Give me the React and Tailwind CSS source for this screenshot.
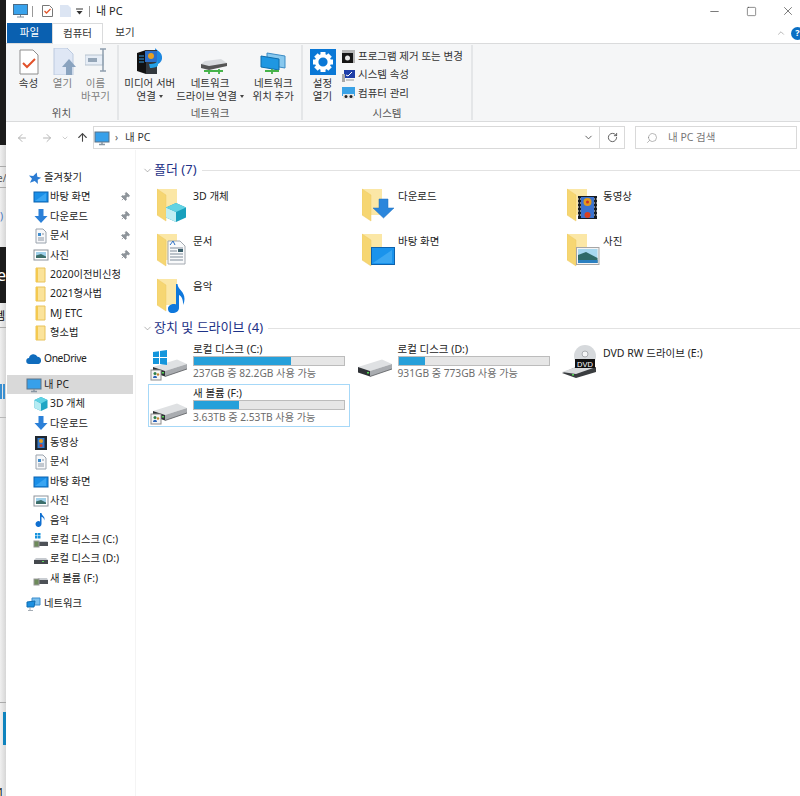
import React from 'react';
import { ArrowLeft, ArrowRight, ArrowUp, ChevronDown, ChevronUp, RotateCw, Search, Pin, Minus, Square, X } from 'lucide-react';

/* small nav pane icons, all 16x16 */
const Mini = ({ type }) => {
  const icons = {
    star: <path d="M9.500 2l1.500 4 4 .3-3 2.600 1 4.100-3.600-2.200L5 13.500l1.200-4.300L2.500 6.500l4.300-.3z" fill="#2b7cd3" transform="rotate(12 8 8)" />,
    desktop: <><rect x="1" y="3" width="14" height="10" fill="#1a8fe8" stroke="#0a62b0" /><path d="M2 12l11-8v8z" fill="#3aa5f2" /></>,
    download: <path d="M5.500 1h5v7h4L8 15 1.500 8h4z" fill="#2b80d8" />,
    doc: <><path d="M3 1h7l3 3v11H3z" fill="#f6f7f9" stroke="#9aa3ad" /><path d="M5 5h3v3H5z" fill="#3f8ccc" /><path d="M5 10h6M5 12h6M9 6h2" stroke="#8b96a3" /></>,
    photo: <><rect x="1" y="3" width="14" height="10" fill="#fff" stroke="#8d949b" /><rect x="3" y="5" width="10" height="6" fill="#9fd0ea" /><path d="M3 11V8.500l5-1.500 5 2.500V11z" fill="#3c6e6a" /></>,
    folder: <><path d="M3 1h9v14H3z" fill="#fbe39a" stroke="#e8c25a" /><path d="M3 1h2v14H3z" fill="#f4c94f" /></>,
    cloud: <path d="M3.500 13a3 3 0 0 1-.5-6 4.500 4.500 0 0 1 8.500-1.200A3.700 3.700 0 0 1 12.500 13z" fill="#0f6cbd" />,
    pc: <><rect x="1" y="2" width="14" height="10" fill="#37a0ea" stroke="#5d7286" /><path d="M5 14.500h6M8 12v2" stroke="#8a97a3" strokeWidth="1.500" /></>,
    cube: <><path d="M8 1l6.500 3v8L8 15l-6.500-3V4z" fill="#1fa5c4" /><path d="M8 7.500V15l-6.500-3V4z" fill="#b6ecf3" /><path d="M8 1l6.500 3L8 7.500 1.500 4z" fill="#5fd2e4" /></>,
    film: <><rect x="2" y="1" width="12" height="14" fill="#20272f" /><rect x="4.500" y="3" width="7" height="10" fill="#3478c8" /><circle cx="8" cy="6" r="2" fill="#e8a020" /><circle cx="8" cy="10.500" r="1.500" fill="#d23a2a" /></>,
    note: <path d="M7 1h1.500c.3 3 4.500 3.500 2.500 7.500.3-2.500-1-3.300-2.500-3.800V12a3 3 0 1 1-1.500-2.600z" fill="#0f6fd0" />,
    driveC: <><path d="M4 10h11v4H4z" fill="#4d5157" /><path d="M5 9h9l1 1H4z" fill="#c9cdd2" /><path d="M2 1h2.500v2.500H2zM5 1h2.500v2.500H5zM2 4h2.500v2.500H2zM5 4h2.500v2.500H5z" fill="#1793dd" /><rect x="1" y="9" width="5" height="6" fill="#6d8a5a" stroke="#999" /></>,
    drive: <><path d="M1 9h14v4H1z" fill="#44484d" /><path d="M3 7h10l2 2H1z" fill="#c6cacf" /><rect x="9" y="10" width="2" height="1" fill="#5fd35f" /></>,
    driveF: <><path d="M4 9h11v4H4z" fill="#4d5157" /><path d="M5 7h9l1 2H4z" fill="#c9cdd2" /><rect x="1" y="8" width="5" height="6" fill="#6d8a5a" stroke="#999" /></>,
    network: <><path d="M6 2h8v7H6z" fill="#7cc0ee" stroke="#3a8ccc" /><path d="M1 6l8-1-1 6H1z" fill="#1b8fe0" stroke="#0f6cb0" /><path d="M4 11v3M2 14.500h5" stroke="#a5adb5" /></>,
  };
  return <svg width="16" height="16" viewBox="0 0 16 16" className="shrink-0">{icons[type]}</svg>;
};

const favorites = [
  ['desktop', '바탕 화면', true],
  ['download', '다운로드', true],
  ['doc', '문서', true],
  ['photo', '사진', true],
  ['folder', '2020이전비신청'],
  ['folder', '2021형사법'],
  ['folder', 'MJ ETC'],
  ['folder', '형소법'],
];

const pcItems = [
  ['cube', '3D 개체'],
  ['download', '다운로드'],
  ['film', '동영상'],
  ['doc', '문서'],
  ['desktop', '바탕 화면'],
  ['photo', '사진'],
  ['note', '음악'],
  ['driveC', '로컬 디스크 (C:)'],
  ['drive', '로컬 디스크 (D:)'],
  ['driveF', '새 볼륨 (F:)'],
];

const NavRoot = ({ icon, label, active, className = '', labelClass = '' }) => (
  <div className={`flex items-center h-[19.4px] gap-[2px] text-[#222] ${active ? 'bg-[#d9d9d9] ml-[1px] mr-[2px] pl-[19px]' : 'pl-[20px]'} ${className}`}>
    <Mini type={icon} />
    <span className={labelClass}>{label}</span>
  </div>
);

const NavChild = ({ icon, label, pinned }) => (
  <div className="flex items-center h-[19.4px] pl-[27px] pr-[4px] gap-[1px] text-[#222]">
    <Mini type={icon} />
    <span className="whitespace-nowrap">{label}</span>
    {pinned && <Pin size={10} className="ml-auto mr-[1px] rotate-45 text-[#8f959b] fill-[#8f959b]" />}
  </div>
);

/* big folder with overlay */
const BigFolder = ({ kind }) => {
  const overlays = {
    cube: <><path d="M19 15l10 4.500v10L19 34l-10-4.500v-10z" fill="#18a0bd" /><path d="M19 24v10l-10-4.500v-10z" fill="#bfeef3" /><path d="M19 15l10 4.500-10 4.500-10-4.500z" fill="#62d3e3" /></>,
    download: <path d="M17 11h9v9h6L21.500 30 11 20h6z" fill="#2b86dc" stroke="#1f6fbe" strokeWidth=".5" />,
    film: <g transform="translate(-1 -4)"><rect x="12" y="12" width="19" height="23" fill="#171c22" /><rect x="15" y="13" width="13" height="21" fill="#3a72cf" /><circle cx="21.500" cy="18" r="4" fill="#e29a1b" /><circle cx="21.500" cy="18" r="1.500" fill="#c9302c" /><circle cx="21.500" cy="31" r="3" fill="#d9401f" /><path d="M12 15h3M12 19h3M12 23h3M12 27h3M12 31h3M28 15h3M28 19h3M28 23h3M28 27h3M28 31h3" stroke="#e8e8e8" strokeDasharray="1 1" /></g>,
    doc: <><path d="M11 8h12l5 5v18H11z" fill="#f9fafb" stroke="#a3a9b0" /><path d="M13 12l3-4 2 4" fill="none" stroke="#2a6fc4" /><path d="M13 15h13M13 18h7M13 21h13M13 24h13M13 27h13" stroke="#7e8b99" /><rect x="21" y="16" width="5" height="3" fill="#3a5f6b" /></>,
    desktop: <><rect x="9.500" y="14.500" width="23" height="17" fill="#1a93ec" stroke="#0d62ad" /><path d="M11 30l19-13v13z" fill="#3ba7f2" /></>,
    photo: <><rect x="9.500" y="14.500" width="22.500" height="17" fill="#f4f4f4" stroke="#a6a6a6" /><rect x="11" y="16" width="19.500" height="14" fill="#a7d8f0" /><path d="M11 30v-8l8-3 11.500 6v5z" fill="#2f6a68" /><path d="M11 30v-3h19.500v3z" fill="#2b7fc0" /></>,
    music: <path d="M19 6h1.500c.5 6 7 7 7 15 0 2-.5 4-1.500 6 .5-5-1.500-9-4-10v13c0 3-3 5-6.500 5S11 33 11 30.500s3-4.500 6-4.500c.8 0 1.500.1 2 .4z" fill="#0f78dc" />,
  };
  return (
    <svg width="36" height="36" viewBox="0 0 36 36" className="shrink-0">
      <path d="M0 1h20v26H6z" fill="#fbe7a6" />
      <path d="M0 1l9 6v26l-9-6z" fill="#f6d672" />
      <path d="M0 1l9 6v26l-9-6z" fill="none" stroke="#eecb66" strokeWidth=".5" />
      {overlays[kind]}
    </svg>
  );
};

const folders = [
  ['cube', '3D 개체'],
  ['download', '다운로드'],
  ['film', '동영상'],
  ['doc', '문서'],
  ['desktop', '바탕 화면'],
  ['photo', '사진'],
  ['music', '음악'],
];

const BigDrive = ({ win, share }) => (
  <svg width="44" height="42" viewBox="0 0 44 42" className="shrink-0">
    <path d="M4 26l24-7.500 10 4.500-22 7z" fill="#dfe1e3" />
    <path d="M4 26l12 4v5.500L4 31.500z" fill="#2f3236" />
    <path d="M16 30l22-7v5l-22 7.500z" fill="#a9acb0" />
    <path d="M16 35.500l22-7.500" stroke="#55585c" strokeWidth=".8" />
    <rect x="13" y="31" width="2" height="1.500" fill="#54d654" />
    {win && <path d="M4 11l6-.8V16H4zM11 10l7-1v7h-7zM4 17h6v6H4zM11 17h7v7l-7-1z" fill="#1496dc" />}
    {share && <><rect x="2" y="29" width="10" height="10" fill="#f5f5f5" stroke="#8c8c8c" /><circle cx="6" cy="32.500" r="1.500" fill="#2e7f4a" /><path d="M4 37c0-3 4-3 4 0z" fill="#2a62b8" /><circle cx="9" cy="33.500" r="1.200" fill="#c7862d" /></>}
  </svg>
);

const DvdDrive = () => (
  <svg width="44" height="42" viewBox="0 0 44 42" className="shrink-0">
    <circle cx="27" cy="15" r="11" fill="#d6d9dc" />
    <circle cx="27" cy="13" r="3" fill="#f4f5f6" stroke="#a9adb1" />
    <path d="M4 32l14-6h20v5L18 37z" fill="#3a3d40" />
    <path d="M4 31l14-5h20L18 33z" fill="#d9dbdd" />
    <rect x="17" y="18" width="20" height="9" fill="#111" />
    <text x="27" y="25.500" textAnchor="middle" fontSize="7.500" fill="#fff" fontFamily="Liberation Sans">DVD</text>
    <rect x="14" y="33" width="2" height="1.500" fill="#54d654" />
  </svg>
);

const drives = [
  { name: '로컬 디스크 (C:)', used: 64.500, info: '237GB 중 82.2GB 사용 가능', win: true, share: true },
  { name: '로컬 디스크 (D:)', used: 17.500, info: '931GB 중 773GB 사용 가능' },
  { name: 'DVD RW 드라이브 (E:)', dvd: true },
  { name: '새 볼륨 (F:)', used: 30.300, info: '3.63TB 중 2.53TB 사용 가능', share: true, selected: true },
];

const SectionHead = ({ title, className = '' }) => (
  <div className={`flex items-center h-[20px] pl-[6px] ${className}`}>
    <ChevronDown size={11} strokeWidth={1.200} className="text-[#777]" />
    <span className="ml-[1px] text-[13px] text-[#1e3287] whitespace-nowrap">{title}</span>
    <div className="flex-1 h-px bg-[#e2e2e2] ml-[5px]" />
  </div>
);

const RibbonBtn = ({ w, label, dim, icon }) => (
  <div className={`flex flex-col items-center ${w}`}>
    <div className="h-[29px] flex items-end justify-center">{icon}</div>
    <div className={`mt-[2px] text-center leading-[12.500px] whitespace-nowrap ${dim ? 'text-[#808080]' : 'text-[#333]'}`}>{label}</div>
  </div>
);

const Caret = () => <span className="inline-block align-middle ml-[3px] border-x-[2.500px] border-x-transparent border-t-[3px] border-t-[#444]" />;

const Gear = () => (
  <svg width="26" height="26" viewBox="0 0 26 26">
    <rect width="26" height="26" fill="#0a78d6" />
    {[0, 45, 90, 135, 180, 225, 270, 315].map((a) => (
      <rect key={a} x="10.500" y="3" width="5" height="5" fill="#fff" transform={`rotate(${a} 13 13)`} />
    ))}
    <circle cx="13" cy="13" r="6.300" fill="none" stroke="#fff" strokeWidth="3.400" />
  </svg>
);

const App = () => {
  return (
    <div className="flex w-[800px] h-[796px] overflow-hidden bg-white text-[10.5px] font-['Noto_Sans','Noto_Sans_CJK_KR',sans-serif]">
      {/* bit of the window behind */}
      <div className="w-[6px] shrink-0 flex flex-col overflow-hidden bg-gradient-to-r from-[#f0f0f0] to-[#d6d6d6] text-black leading-none">
        <div className="h-[145px] bg-[#1b1b1b]" />
        <div className="h-[21px]" />
        <div className="h-[22px] border-t border-[#aaa] border-b pt-[6px] text-[10px] text-[#555] whitespace-nowrap -ml-[3px]">e/</div>
        <div className="h-[59px] pt-[23px] text-[#4a78c0]">)</div>
        <div className="h-[56px] bg-[#1b1b1b] text-white text-[16px] leading-[56px] flex items-center -ml-[3px]">e</div>
        <div className="h-[25px] pt-[7px] border-b border-[#aaa] text-[11px] -ml-[5px] whitespace-nowrap">템</div>
        <div className="h-[50px] pt-[30px] text-[18px] -ml-[5px]">J</div>
        <div className="h-[21px] flex gap-[1px] pt-[6px]">
          <div className="w-[2px] bg-[#3a8fd0]" />
          <div className="w-[2px] bg-[#3a8fd0]" />
        </div>
        <div className="h-[19px] border-b border-[#b8b8b8]" />
        <div className="h-[285px] border-b border-[#aaa]" />
        <div className="h-[9px]" />
        <div className="h-[33px] w-[3px] ml-[3px] bg-[#0f83bd]" />
        <div className="flex-1" />
        <div className="text-[10px] -ml-[2px] leading-[8px]">1</div>
      </div>

      {/* explorer window */}
      <div className="flex-1 min-w-0 flex flex-col">
        {/* title bar */}
        <div className="h-[21px] flex items-center pl-[7px] pt-px text-[11px] text-[#222]">
          <svg width="15" height="14" viewBox="0 0 15 14"><rect x=".5" y=".5" width="14" height="10" fill="#38a2ec" stroke="#4a6b86" /><path d="M4 13h7M7.500 11v2" stroke="#7e8e9c" /></svg>
          <div className="w-px h-[11px] bg-[#999] ml-[4px]" />
          <svg width="11" height="12" viewBox="0 0 11 12" className="ml-[9px]"><path d="M.5.5h7l3 3v8H.5z" fill="#fff" stroke="#777" /><path d="M2.500 6l2 2 4-4" fill="none" stroke="#e2562a" strokeWidth="1.300" /></svg>
          <svg width="11" height="12" viewBox="0 0 11 12" className="ml-[7px]"><path d="M0 0h8l3 3v9H0z" fill="#dce5f3" /></svg>
          <svg width="7" height="7" viewBox="0 0 7 7" className="ml-[5px]"><path d="M0 1h7" stroke="#333" /><path d="M.5 3h6L3.500 6.500z" fill="#333" /></svg>
          <div className="w-px h-[11px] bg-[#999] ml-[6px]" />
          <span className="ml-[6px]">내 PC</span>
          <div className="ml-auto flex items-center pr-[5px] text-[#333]">
            <Minus size={13} strokeWidth={1.200} />
            <Square size={11} strokeWidth={1.200} className="ml-[25px]" />
            <X size={14} strokeWidth={1.100} className="ml-[24px]" />
          </div>
        </div>

        {/* tabs */}
        <div className="h-[22px] flex items-end pl-px relative z-10">
          <div className="w-[45px] h-[20px] bg-[#0a60b0] text-white flex items-center justify-center">파일</div>
          <div className="w-[51px] h-[21px] -mb-px bg-white border-x border-t border-[#dadbdc] flex items-center justify-center text-[#333]">컴퓨터</div>
          <div className="w-[44px] h-[20px] flex items-center justify-center text-[#333]">보기</div>
          <div className="ml-auto flex items-center h-[20px] gap-[5px] -mr-[4px]">
            <ChevronUp size={10} className="text-[#aaa]" />
            <div className="w-[13px] h-[13px] rounded-full bg-[#0a6fc4] text-white text-[9px] font-bold flex items-center justify-center">?</div>
          </div>
        </div>

        {/* ribbon */}
        <div className="h-[79px] bg-[#f5f6f7] border-y border-[#dadbdc] flex">
          <div className="w-[113px] flex flex-col items-center border-r-2 border-[#e4e6e8] my-[1px]">
            <div className="flex pl-[4px] w-full h-[62px] pt-[1px]">
              <RibbonBtn w="w-[37px]" label="속성" icon={
                <svg width="20" height="26" viewBox="0 0 20 26" className="ml-px"><path d="M1 1h13l5 5v19H1z" fill="#fff" stroke="#8d8d8d" /><path d="M4 14l4 4 8-8" fill="none" stroke="#e2512a" strokeWidth="2" /></svg>} />
              <RibbonBtn w="w-[31px]" dim label="열기" icon={
                <svg width="24" height="27" viewBox="0 0 24 27" className="ml-[5px]"><path d="M1 0h13l6 6v21H1z" fill="#dfe7f5" stroke="#bccadf" /><path d="M16 11l7 8h-4v8h-6v-8H9z" fill="#8aa3bf" /></svg>} />
              <RibbonBtn w="w-[35px]" dim label={<>이름<br />바꾸기</>} icon={
                <svg width="24" height="24" viewBox="0 0 24 24" className="mb-[3px] ml-[2px]"><rect x="0" y="7" width="18" height="10" fill="#e6edf6" stroke="#b8c3d0" /><rect x="3" y="10" width="9" height="4" fill="#95a6b8" /><path d="M15 1h6M15 23h6M18 1v22" stroke="#8f9eaf" strokeWidth="1.500" fill="none" /></svg>} />
            </div>
            <div className="text-[#555] leading-[14px]">위치</div>
          </div>
          <div className="w-[184px] flex flex-col items-center border-r-2 border-[#e4e6e8] my-[1px]">
            <div className="flex pl-[3px] w-full h-[62px] pt-[1px]">
              <RibbonBtn w="w-[56px]" label={<>미디어 서버<br />연결<Caret /></>} icon={
                <svg width="26" height="27" viewBox="0 0 26 27"><path d="M18 0c2 3 8 4 7 11-.5 3-3 5-6 6z" fill="#1e88e0" /><path d="M0 5l9-3v24l-9-3z" fill="#111" /><path d="M9 2h11v24H9z" fill="#33383d" /><rect x="8" y="3" width="12" height="11" fill="#2c6fc9" /><circle cx="14" cy="8" r="3" fill="#e8a020" /><path d="M2 8h5M2 11h5M2 14h5" stroke="#3b9ce0" /><path d="M12 16c5 0 9-1 9-5v6c0 2-4 3-8 3z" fill="#24a0e6" /></svg>} />
              <RibbonBtn w="w-[65px]" label={<>네트워크<br />드라이브 연결<Caret /></>} icon={
                <svg width="28" height="18" viewBox="0 0 28 18" className="ml-[8px]"><path d="M1 7l4-3 16-2 6 4v3L9 12z" fill="#d8dbde" /><path d="M1 7l8 2 18-3v3L9 13 1 11z" fill="#555" /><path d="M4 14h19M9 13v4M19 12v5" stroke="#46b34a" strokeWidth="1.800" /></svg>} />
              <RibbonBtn w="w-[56px] ml-[3px]" label={<>네트워크<br />위치 추가</>} icon={
                <svg width="26" height="23" viewBox="0 0 26 23"><path d="M7 1l18 3v12L7 13z" fill="#88c8ee" stroke="#3b8bc4" /><path d="M1 4l18 3v11L1 15z" fill="#1f97e2" stroke="#0f6cab" /><path d="M5 19h14M12 17v5" stroke="#46b34a" strokeWidth="1.800" /></svg>} />
            </div>
            <div className="text-[#555] leading-[14px]">네트워크</div>
          </div>
          <div className="w-[170px] flex flex-col items-center border-r-2 border-[#e4e6e8] my-[1px]">
            <div className="flex w-full h-[62px] pt-[1px]">
              <div className="w-[38px] flex flex-col items-center pt-[3px] pl-[1px] text-[#333] leading-[12.500px] text-center">
                <Gear />
                <div className="mt-[2px]">설정<br />열기</div>
              </div>
              <div className="flex flex-col pt-[1px] ml-[1px]">
                {[
                  ['프로그램 제거 또는 변경', <svg key="a" width="13" height="13" viewBox="0 0 13 13"><rect width="13" height="13" fill="#b5b5b5" /><rect y="3" width="11" height="10" fill="#151515" /><circle cx="5.500" cy="8" r="2.500" fill="#e9e9e9" /></svg>],
                  ['시스템 속성', <svg key="b" width="13" height="13" viewBox="0 0 13 13"><rect x="2" y="1" width="11" height="8" fill="#1f3fa8" /><path d="M4 6l2 1 4-4" stroke="#fff" fill="none" /><rect y="5" width="3" height="8" fill="#a8a8a8" /><path d="M4 11h8" stroke="#999" /></svg>],
                  ['컴퓨터 관리', <svg key="c" width="13" height="13" viewBox="0 0 13 13"><rect width="13" height="9" fill="#3aa2e6" /><rect x="1" y="7" width="11" height="5" fill="#e8e8e8" /><circle cx="4" cy="9.500" r="1.500" fill="#222" /><circle cx="9" cy="9.500" r="1.500" fill="#222" /></svg>],
                ].map(([label, icon]) => (
                  <div key={label} className="h-[18.800px] flex items-center gap-[3px] text-[#333] whitespace-nowrap">
                    {icon}
                    <span>{label}</span>
                  </div>
                ))}
              </div>
            </div>
            <div className="text-[#555] leading-[14px]">시스템</div>
          </div>
        </div>

        {/* address bar */}
        <div className="h-[28px] flex items-end pb-px">
          <div className="w-[87px] h-[23px] flex items-center pl-[10px] text-[#b5b5b5]">
            <ArrowLeft size={12} />
            <ArrowRight size={12} className="ml-[13px]" />
            <ChevronDown size={8} className="ml-[8px]" />
            <ArrowUp size={13} strokeWidth={2} className="ml-[7px] text-[#444]" />
          </div>
          <div className="w-[532px] h-[23px] border border-[#d9d9d9] flex items-center text-[#333]">
            <Mini type="pc" />
            <span className="ml-[5px] text-[#555] text-[10px]">›</span>
            <span className="ml-[7px]">내 PC</span>
            <ChevronDown size={11} className="ml-auto mr-[5px] text-[#555]" />
            <div className="w-px h-full bg-[#d9d9d9]" />
            <div className="w-[24px] flex justify-center"><RotateCw size={11} className="text-[#555]" /></div>
          </div>
          <div className="ml-[10px] w-[162px] h-[23px] border border-[#d9d9d9] flex items-center pl-[10px] text-[#777]">
            <Search size={12} strokeWidth={1.200} className="-scale-x-100 text-[#888]" />
            <span className="ml-[10px]">내 PC 검색</span>
          </div>
        </div>

        {/* body */}
        <div className="flex-1 flex min-h-0">
          <div className="w-[130px] shrink-0 pt-[18px] border-r border-[#f4f4f4] text-[10.300px]">
            <NavRoot icon="star" label="즐겨찾기" />
            {favorites.map(([icon, label, pinned]) => (
              <NavChild key={label} icon={icon} label={label} pinned={pinned} />
            ))}
            <NavRoot icon="cloud" label="OneDrive" labelClass="tracking-[-.4px]" className="mt-[6.500px]" />
            <NavRoot icon="pc" label="내 PC" active className="mt-[6.500px]" />
            {pcItems.map(([icon, label]) => (
              <NavChild key={label} icon={icon} label={label} />
            ))}
            <NavRoot icon="network" label="네트워크" className="mt-[6px]" />
          </div>

          <div className="flex-1 min-w-0 pt-[10px] text-[#222]">
            <SectionHead title="폴더 (7)" />
            <div className="grid grid-cols-[repeat(3,205px)] gap-y-[5px] pl-[12px] pt-[6px]">
              {folders.map(([kind, label]) => (
                <div key={label} className="h-[40px] flex pt-[2px] pl-[9px]">
                  <BigFolder kind={kind} />
                  <span className="leading-[16px]">{label}</span>
                </div>
              ))}
            </div>
            <SectionHead title="장치 및 드라이브 (4)" className="mt-[2px]" />
            <div className="grid grid-cols-[repeat(3,204.500px)] gap-y-px pl-[12px] pt-[2px]">
              {drives.map((d) => (
                <div key={d.name} className={`h-[43px] w-[202px] flex border ${d.selected ? 'border-[#a6d8f8]' : 'border-transparent'}`}>
                  {d.dvd ? <DvdDrive /> : <BigDrive win={d.win} share={d.share} />}
                  <div className={`flex-1 min-w-0 ${d.dvd ? 'pt-[5px] pl-px' : 'pt-px'}`}>
                    <div className="leading-[14px] h-[14px] whitespace-nowrap">{d.name}</div>
                    {!d.dvd && (
                      <>
                        <div className="w-[152px] h-[10px] bg-[#e6e6e6] border border-[#bcbcbc]">
                          <div className="h-full bg-[#26a0da]" style={{ width: `${d.used}%` }} />
                        </div>
                        <div className="leading-[12px] mt-px text-[10.200px] text-[#6d6d6d] whitespace-nowrap">{d.info}</div>
                      </>
                    )}
                  </div>
                </div>
              ))}
            </div>
          </div>
        </div>
      </div>
    </div>
  );
};

export default App;
